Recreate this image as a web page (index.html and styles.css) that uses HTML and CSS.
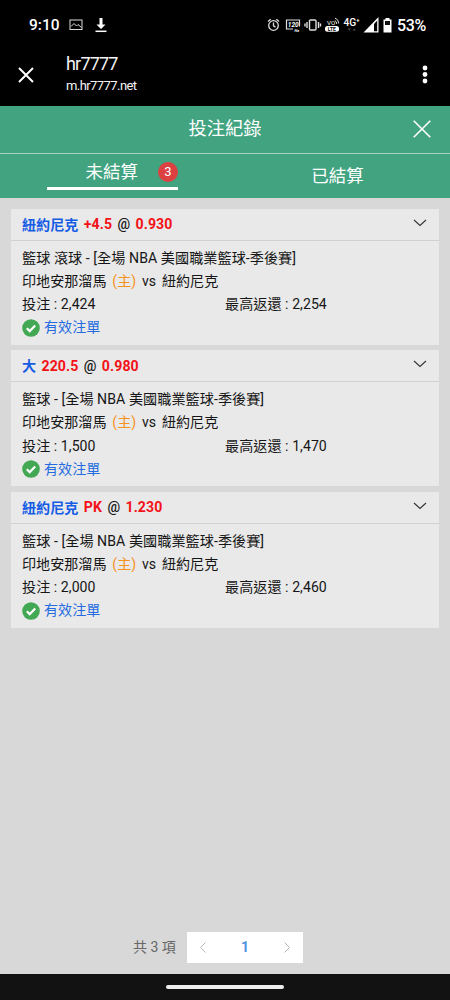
FILE: index.html
```html
<!DOCTYPE html>
<html lang="zh-Hant">
<head>
<meta charset="utf-8">
<meta name="viewport" content="width=device-width, initial-scale=1">
<title>投注紀錄</title>
<link rel="stylesheet" href="styles.css">
</head>
<body>
<div class="screen">
  <div class="status">
    <span class="clock">9:10</span>
    <svg class="ic-photo" width="14" height="12" viewBox="0 0 14 12" fill="none" stroke="#ddd"><rect x="1" y="1" width="12" height="9.5"/><path d="M2 7.500l3-3 2.500 2.500L9 5.500l3.500 3"/></svg>
    <svg class="ic-down" width="12" height="16" viewBox="0 0 12 16"><path d="M4.500 1h3v6.500h3L6 12 1.500 7.500h3z" fill="#fff"/><path d="M.5 14.300h11" stroke="#fff" stroke-width="1.500"/></svg>
    <svg class="ic-row" width="98" height="18" viewBox="0 0 98 18" fill="none" stroke="#ddd">
      <g stroke-width="1.300"><circle cx="6.500" cy="9.500" r="4.800"/><path d="M6.500 6.500v3.300l2 1.300M1 5.500l2.700-2.300M12 5.500L9.300 3.200"/></g>
      <path d="M26 13h-6.500V4h13v6.500" stroke-width="1.200"/>
      <text class="tiny hz120" x="20.800" y="10.800">120</text><text class="tiny hz" x="27.500" y="15.800">Hz</text>
      <g stroke-width="1.400"><rect x="42.500" y="4" width="6.500" height="10" rx="1"/><path d="M40 6v6M51.500 6v6M38 7.500v3M53.500 7.500v3"/></g>
      <text class="tiny vo" x="60" y="9">VO</text><path d="M67.800 4.500q1.900.8 1.900 3.500M68 2q3.700 1.400 3.700 5.500"/>
      <rect x="58" y="10" width="14" height="5.800" rx="2.500" fill="#fff" stroke="none"/><text class="tiny lte" x="60.800" y="14.800">LTE</text>
      <text class="tiny net" x="76.500" y="9.700">4G</text><text class="tiny plus" x="89.300" y="6">+</text>
      <path d="M80.700 12.500l1.500 2 1.500-2zM85.700 14.500l1.500-2 1.500 2z" fill="#555" stroke="none"/>
    </svg>
    <svg class="ic-signal" width="16" height="16" viewBox="0 0 16 16"><path d="M.5 15.500L15.500 0v15.500z" fill="#fff"/><path d="M11 7L14.200 3.500v10.700H11z" fill="#000"/></svg>
    <svg class="ic-batt" width="9" height="15" viewBox="0 0 9 15"><path d="M2.500 0h4v1.500H8.500V14.500H.5V1.500h2z" fill="#fff"/><path d="M2 3h5v4H2z" fill="#111"/></svg>
    <span class="percent">53%</span>
  </div>
  <div class="appbar">
    <svg class="app-close" width="16" height="16" viewBox="0 0 16 16" stroke="#fff" stroke-width="2"><path d="M1 1l14 14M15 1L1 15"/></svg>
    <div class="site"><div class="site-name">hr7777</div><div class="site-url">m.hr7777.net</div></div>
    <svg class="dots" width="6" height="20" viewBox="0 0 6 20" fill="#fff"><circle cx="3" cy="3" r="2.400"/><circle cx="3" cy="9.500" r="2.400"/><circle cx="3" cy="16" r="2.400"/></svg>
  </div>
  <div class="titlebar">
    <h1>投注紀錄</h1>
    <svg class="title-close" width="18" height="18" viewBox="0 0 18 18" stroke="#fff" stroke-width="1.600"><path d="M.7.700l16.600 16.600M17.300.700L.7 17.300"/></svg>
  </div>
  <div class="tabs">
    <div class="tab"><div class="active"><span>未結算</span><b class="badge">3</b></div></div>
    <div class="tab plain">已結算</div>
  </div>
  <main>
    <section class="card">
      <div class="head"><span class="pick">紐約尼克</span><span class="odd">+4.5</span><span class="at">@</span><span class="odd">0.930</span><svg class="chev" width="14" height="8" viewBox="0 0 14 8" fill="none" stroke="#333" stroke-width="1.100"><path d="M1 1l6 5.500L13 1"/></svg></div>
      <div class="body">
        <div class="row league">籃球 滾球 - [全場 NBA 美國職業籃球-季後賽]</div>
        <div class="row teams"><span>印地安那溜馬</span><span class="home">(主)</span><span>vs</span><span>紐約尼克</span></div>
        <div class="row money"><span>投注 : 2,424</span><span>最高返還 : 2,254</span></div>
        <div class="row valid"><svg width="18" height="18" viewBox="0 0 18 18"><circle cx="9" cy="9" r="8.800" fill="#43a854"/><path d="M4.800 9.300l2.900 2.800 5.500-5.600" fill="none" stroke="#fff" stroke-width="2.200"/></svg><span>有效注單</span></div>
      </div>
    </section>
    <section class="card">
      <div class="head"><span class="pick">大</span><span class="odd">220.5</span><span class="at">@</span><span class="odd">0.980</span><svg class="chev" width="14" height="8" viewBox="0 0 14 8" fill="none" stroke="#333" stroke-width="1.100"><path d="M1 1l6 5.500L13 1"/></svg></div>
      <div class="body">
        <div class="row league">籃球 - [全場 NBA 美國職業籃球-季後賽]</div>
        <div class="row teams"><span>印地安那溜馬</span><span class="home">(主)</span><span>vs</span><span>紐約尼克</span></div>
        <div class="row money"><span>投注 : 1,500</span><span>最高返還 : 1,470</span></div>
        <div class="row valid"><svg width="18" height="18" viewBox="0 0 18 18"><circle cx="9" cy="9" r="8.800" fill="#43a854"/><path d="M4.800 9.300l2.900 2.800 5.500-5.600" fill="none" stroke="#fff" stroke-width="2.200"/></svg><span>有效注單</span></div>
      </div>
    </section>
    <section class="card">
      <div class="head"><span class="pick">紐約尼克</span><span class="odd">PK</span><span class="at">@</span><span class="odd">1.230</span><svg class="chev" width="14" height="8" viewBox="0 0 14 8" fill="none" stroke="#333" stroke-width="1.100"><path d="M1 1l6 5.500L13 1"/></svg></div>
      <div class="body">
        <div class="row league">籃球 - [全場 NBA 美國職業籃球-季後賽]</div>
        <div class="row teams"><span>印地安那溜馬</span><span class="home">(主)</span><span>vs</span><span>紐約尼克</span></div>
        <div class="row money"><span>投注 : 2,000</span><span>最高返還 : 2,460</span></div>
        <div class="row valid"><svg width="18" height="18" viewBox="0 0 18 18"><circle cx="9" cy="9" r="8.800" fill="#43a854"/><path d="M4.800 9.300l2.900 2.800 5.500-5.600" fill="none" stroke="#fff" stroke-width="2.200"/></svg><span>有效注單</span></div>
      </div>
    </section>
  </main>
  <footer class="pager">
    <span class="total">共 3 項</span>
    <div class="pages">
      <svg width="6" height="11" viewBox="0 0 6 11" fill="none" stroke="#b5b8bd"><path d="M5.500.5l-5 5 5 5"/></svg>
      <span class="page">1</span>
      <svg width="6" height="11" viewBox="0 0 6 11" fill="none" stroke="#b5b8bd"><path d="M.5.500l5 5-5 5"/></svg>
    </div>
  </footer>
  <div class="navbar"><div class="handle"></div></div>
</div>
</body>
</html>
```

FILE: styles.css
```css
* { box-sizing: border-box; }
body { margin: 0; font-family: Roboto, "Noto Sans CJK TC", sans-serif; }
svg { display: block; flex: none; }
.screen { width: 450px; height: 1000px; display: flex; flex-direction: column; background: #d8d8d8; overflow: hidden; white-space: nowrap; }
.status { height: 50px; flex: none; background: #000; color: #fff; display: flex; align-items: center; padding: 0 0 0 29px; }
.clock { font-size: 15.5px; font-weight: 500; width: 40px; }
.ic-down { margin-left: 12px; }
.ic-row { margin-left: 160px; }
.ic-signal { margin-left: -2px; }
.ic-batt { margin-left: 4px; }
.percent { font-size: 16px; font-weight: 500; margin-left: 5px; letter-spacing: -0.4px; }
.tiny { fill: #fff; stroke: none; font-family: Roboto, sans-serif; }
.hz120 { font-size: 6.500px; font-style: italic; font-weight: 700; }
.hz { font-size: 4px; font-style: italic; font-weight: 700; }
.vo { font-size: 6.2px; }
.lte { font-size: 5px; font-weight: 700; fill: #000; }
.net { font-size: 10.2px; font-weight: 500; }
.plus { font-size: 6px; font-weight: 700; }
.appbar { height: 56px; flex: none; background: #000; color: #f4f4f4; display: flex; align-items: center; padding: 0 22px 7px 18px; }
.site { margin-left: 32px; flex: 1; }
.site-name { font-size: 18px; line-height: 23px; letter-spacing: -0.8px; }
.site-url { font-size: 13px; line-height: 22px; letter-spacing: -0.57px; }
.titlebar { height: 48px; flex: none; background: #41a380; border-bottom: 1px solid #a5d2c2; display: grid; grid-template-columns: 1fr auto 1fr; align-items: center; color: #fff; padding-bottom: 1px; }
.titlebar h1 { grid-column: 2; margin: 0; font-size: 18.3px; font-weight: 400; line-height: 26px; }
.title-close { justify-self: end; margin-right: 19.5px; }
.tabs { height: 44px; flex: none; background: #41a380; color: #fff; display: grid; grid-template-columns: 1fr 1fr; font-size: 17.5px; }
.tab { display: flex; justify-content: center; }
.plain { align-items: center; padding-bottom: 4px; }
.active { width: 131px; height: 36px; border-bottom: 3px solid #fff; display: flex; align-items: center; justify-content: flex-end; gap: 20px; line-height: 33px; padding-top: 3px; }
.badge { width: 20px; height: 20px; border-radius: 50%; background: #dc4040; font-size: 13px; font-weight: 400; line-height: 20px; text-align: center; }
main { flex: 1; padding: 10.5px 11px 0; display: flex; flex-direction: column; gap: 5.4px; color: #161616; font-size: 14.1px; }
.card { height: 136.300px; background: #e9e9e9; }
.head { height: 32px; border-bottom: 1px solid #d1d1d1; display: flex; align-items: center; gap: 5.4px; padding: 0 12px 0 11px; }
.pick { color: #155ce5; font-weight: 700; margin-top: -1px; }
.odd { color: #f31217; font-weight: 700; letter-spacing: 0.1px; }
.at { font-weight: 500; }
.chev { margin-left: auto; margin-bottom: 3px; }
.body { padding: 6.200px 11px 0; }
.row { height: 23.1px; line-height: 23px; }
.league { letter-spacing: 0.07px; }
.teams { display: flex; gap: 5.8px; }
.home { color: #f6921e; }
.money { display: grid; grid-template-columns: 203px 1fr; letter-spacing: 0.05px; }
.valid { display: flex; align-items: center; gap: 4px; color: #246be0; }
.pager { height: 31px; flex: none; margin-bottom: 11px; padding-left: 133px; display: flex; align-items: center; gap: 11px; }
.total { font-size: 14px; color: #666; width: 43px; padding-bottom: 4px; }
.pages { width: 116px; height: 31px; background: #fff; display: flex; align-items: center; justify-content: space-between; padding: 0 13px; }
.page { color: #4d94df; font-size: 14px; font-weight: 700; padding-bottom: 1px; }
.navbar { height: 26px; flex: none; background: #121212; display: flex; justify-content: center; align-items: center; }
.handle { width: 118px; height: 4px; border-radius: 2px; background: #eee; }
```
